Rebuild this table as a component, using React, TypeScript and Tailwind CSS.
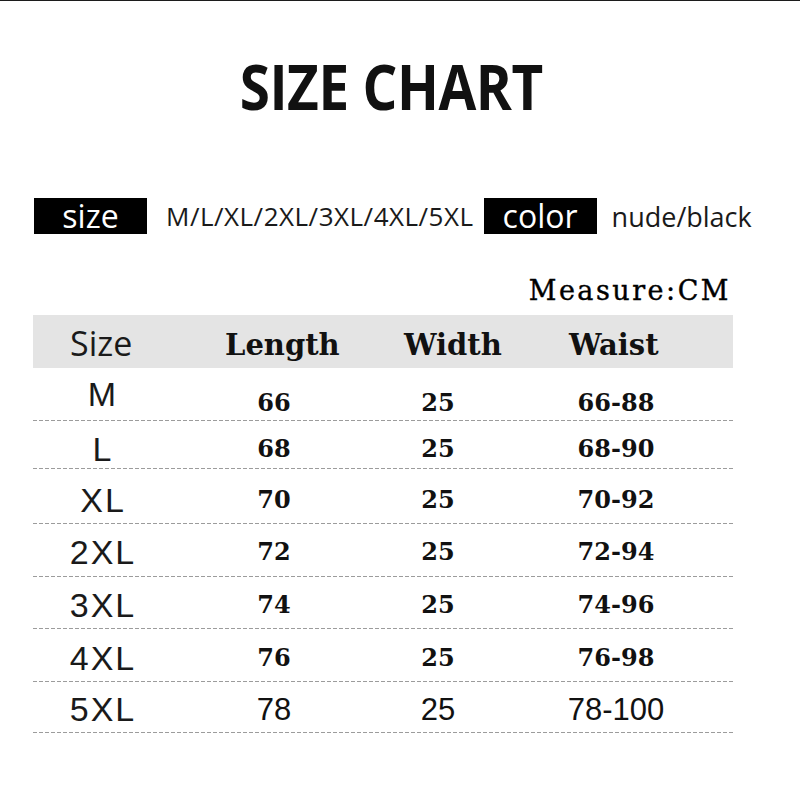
import React from "react";

const rows = [
  { s: "M", l: "66", w: "25", wa: "66-88", row: "h-[53px]", cell: "pt-[0px]", num: "pt-[18px]", last: false },
  { s: "L", l: "68", w: "25", wa: "68-90", row: "h-[48px]", cell: "pt-[9px]", num: "pt-[0px]", last: false },
  { s: "XL", l: "70", w: "25", wa: "70-92", row: "h-[55px]", cell: "pt-[8px]", num: "pt-[0px]", last: false },
  { s: "2XL", l: "72", w: "25", wa: "72-94", row: "h-[53px]", cell: "pt-[4px]", num: "pt-[0px]", last: false },
  { s: "3XL", l: "74", w: "25", wa: "74-96", row: "h-[52px]", cell: "pt-[4px]", num: "pt-[0px]", last: false },
  { s: "4XL", l: "76", w: "25", wa: "76-98", row: "h-[53px]", cell: "pt-[5px]", num: "pt-[0px]", last: false },
  { s: "5XL", l: "78", w: "25", wa: "78-100", row: "h-[51px]", cell: "pt-[4px]", num: "pt-[0px]", last: true },
];

const serif = "font-['DejaVu_Serif',serif]";
const sans = "font-['Open_Sans',sans-serif]";
const arial = "font-['Liberation_Sans',Arial,sans-serif]";

function Dash() {
  return (
    <div className="h-px w-full bg-[repeating-linear-gradient(to_right,#9c9c9c_0px,#9c9c9c_4px,transparent_4px,transparent_6px)]" />
  );
}

export default function App() {
  return (
    <div className="w-[800px] h-[800px] bg-white border-t border-[#1c1c1c] overflow-hidden text-[#111]">
      <div className={`mt-[53px] flex justify-center pr-[17px] ${sans}`}>
        <h1 className="text-[63px] leading-none font-bold tracking-[-0.5px] scale-x-[0.87] text-[#111]">SIZE CHART</h1>
      </div>

      <div className={`mt-[81px] flex items-center h-[36px] pl-[34px] ${sans}`}>
        <div className="w-[113px] h-[36px] bg-black text-white flex items-center justify-center text-[32px] leading-none">
          size
        </div>
        <div className="ml-[19px] text-[26px] leading-none text-[#1a1a1a] tracking-[0.5px]">M/L/XL/2XL/3XL/4XL/5XL</div>
        <div className="ml-[10px] w-[113px] h-[36px] bg-black text-white flex items-center justify-center text-[32px] leading-none">
          color
        </div>
        <div className="ml-[15px] text-[27px] leading-none text-[#1a1a1a]">nude/black</div>
      </div>

      <div className={`mt-[43px] flex justify-end pr-[69px] ${serif}`}>
        <div className="text-[27px] leading-none tracking-[2.5px] text-black [-webkit-text-stroke:0.4px_black]">Measure:CM</div>
      </div>

      <div className="mt-[11px] ml-[33px] w-[700px]">
        <div className="h-[53px] bg-[#e4e4e4] grid grid-cols-[155px_179px_165px_1fr] items-center pl-[37px] pt-[2px]">
          <div className={`${sans} text-[34px] leading-none text-[#1a1a1a]`}>Size</div>
          <div className={`${serif} font-bold text-[29px] leading-none pt-[6px]`}>Length</div>
          <div className={`${serif} font-bold text-[29px] leading-none pt-[6px]`}>Width</div>
          <div className={`${serif} font-bold text-[29px] leading-none pt-[6px]`}>Waist</div>
        </div>

        {rows.map((r) => (
          <div key={r.s} className={`${r.row} flex flex-col`}>
            <div className={`flex-1 grid grid-cols-[138px_206px_122px_234px] items-center ${r.cell}`}>
              <div className={`${arial} text-[34px] leading-none text-center tracking-[2px] pl-[2px] text-[#1a1a1a]`}>{r.s}</div>
              {r.last ? (
                <>
                  <div className={`${arial} text-[31px] leading-none text-center`}>{r.l}</div>
                  <div className={`${arial} text-[31px] leading-none text-center`}>{r.w}</div>
                  <div className={`${arial} text-[31px] leading-none text-center`}>{r.wa}</div>
                </>
              ) : (
                <>
                  <div className={`${serif} font-bold text-[24px] leading-none text-center ${r.num}`}>{r.l}</div>
                  <div className={`${serif} font-bold text-[24px] leading-none text-center ${r.num}`}>{r.w}</div>
                  <div className={`${serif} font-bold text-[24px] leading-none text-center ${r.num}`}>{r.wa}</div>
                </>
              )}
            </div>
            <Dash />
          </div>
        ))}
      </div>
    </div>
  );
}
